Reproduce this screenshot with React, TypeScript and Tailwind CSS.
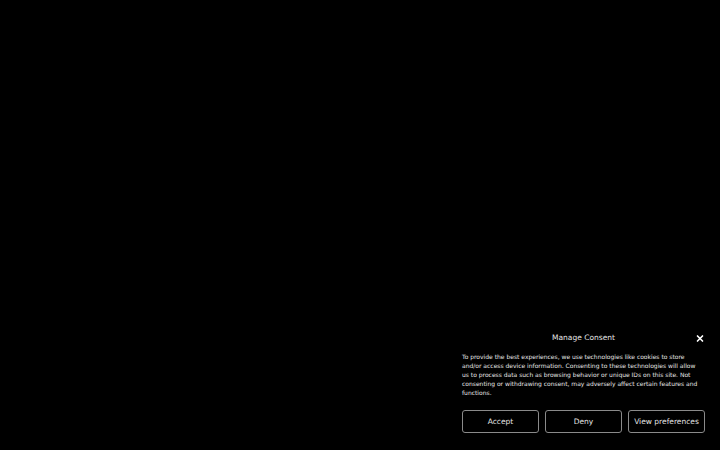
import { X } from "lucide-react";

export default function App() {
  return (
    <div
      className="flex h-[450px] w-[720px] items-end justify-end bg-black pb-[17px] pr-[15px] text-white"
      style={{ fontFamily: '"DejaVu Sans", sans-serif' }}
    >
      <div className="w-[243px]">
        <div className="relative flex h-[14px] items-center justify-center">
          <span className="text-[7.5px] leading-none text-[#e5e5e5]">Manage Consent</span>
          <button className="absolute right-0 top-[2px] flex h-[10px] w-[10px] items-center justify-center text-white">
            <X className="h-[11px] w-[11px]" strokeWidth={4} />
          </button>
        </div>
        <p className="mt-[7px] pr-[4px] text-[6px] leading-[9px] text-[#e6e6e6]">
          To provide the best experiences, we use technologies like cookies to store and/or access
          device information. Consenting to these technologies will allow us to process data such as
          browsing behavior or unique IDs on this site. Not consenting or withdrawing consent, may
          adversely affect certain features and functions.
        </p>
        <div className="mt-[13px] grid grid-cols-3 gap-[6px]">
          {["Accept", "Deny", "View preferences"].map((label) => (
            <button
              key={label}
              className="flex h-[23px] items-center justify-center rounded-[3px] border border-[#8a8a8a] text-[7.5px] text-[#e5e5e5]"
            >
              {label}
            </button>
          ))}
        </div>
      </div>
    </div>
  );
}
